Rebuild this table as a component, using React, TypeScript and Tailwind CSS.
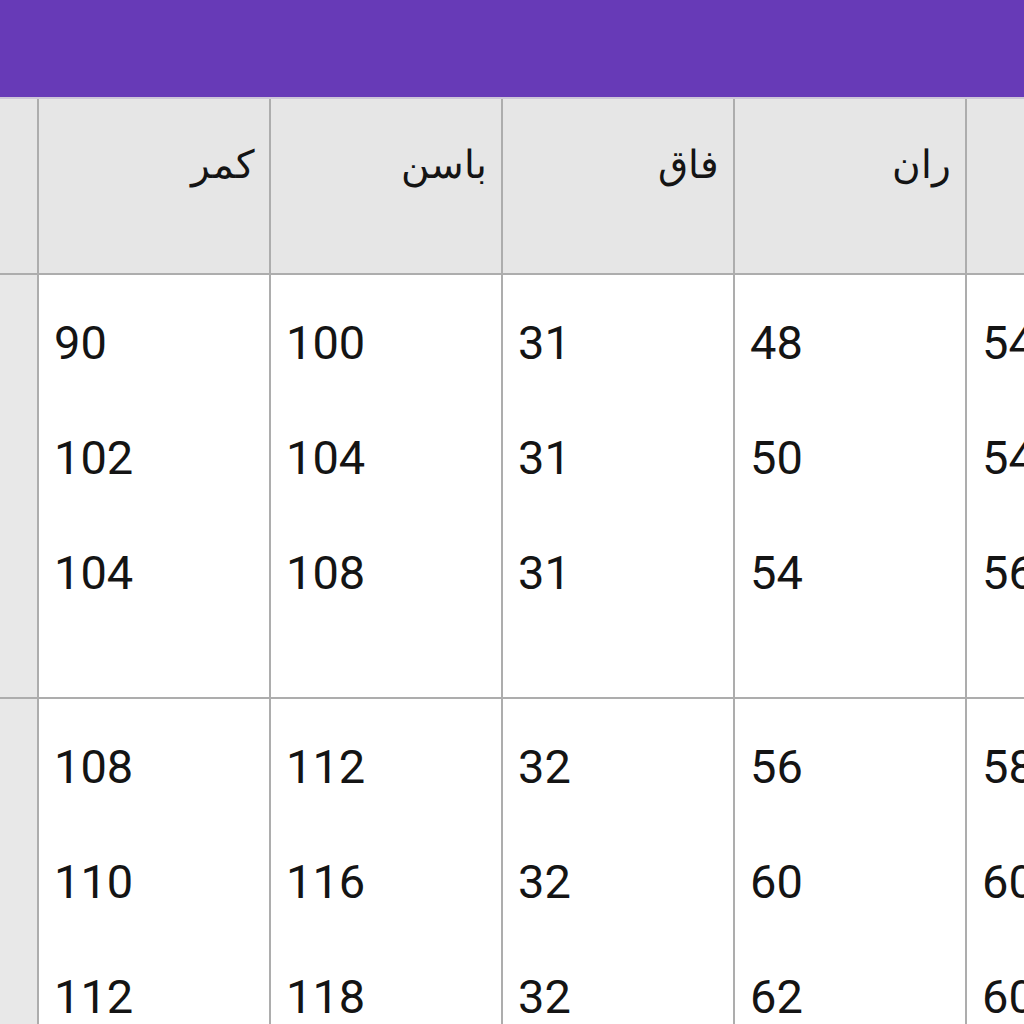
const headers = ["", "کمر", "باسن", "فاق", "ران", ""]

const groups = [
  [
    ["90", "100", "31", "48", "54"],
    ["102", "104", "31", "50", "54"],
    ["104", "108", "31", "54", "56"],
  ],
  [
    ["108", "112", "32", "56", "58"],
    ["110", "116", "32", "60", "60"],
    ["112", "118", "32", "62", "60"],
  ],
]

export default function App() {
  return (
    <div className="w-[1024px] h-[1024px] overflow-hidden bg-white font-['Roboto','Noto_Sans',sans-serif] text-[#141414]">
      {/* Top bar */}
      <div className="h-[97px] bg-[#673ab7]" />
      <div className="h-[2px] bg-[#cdc6d8]" />

      {/* Table */}
      <div className="grid grid-cols-[37px_230px_230px_230px_230px_230px] gap-[2px] bg-[#adadad] w-[1197px]">
        {headers.map((h, i) => (
          <div
            key={"h" + i}
            dir="rtl"
            className="h-[174px] bg-[#e6e6e6] px-[14px] pt-[36px] text-[39px] leading-[60px] text-right text-[#141414]"
          >
            {h}
          </div>
        ))}

        {groups.map((rows, g) => (
          <>
            <div key={"l" + g} className={`${g === 0 ? "h-[422px]" : "h-[400px]"} bg-[#e8e8e8]`} />
            {[0, 1, 2, 3, 4].map((c) => (
              <div
                key={"c" + g + c}
                className={`${g === 0 ? "h-[422px]" : "h-[400px]"} bg-white pl-[15px] pt-[10px] text-[47px] leading-[115px]`}
              >
                {rows.map((r, ri) => (
                  <div key={ri}>{r[c]}</div>
                ))}
              </div>
            ))}
          </>
        ))}
      </div>
    </div>
  )
}
